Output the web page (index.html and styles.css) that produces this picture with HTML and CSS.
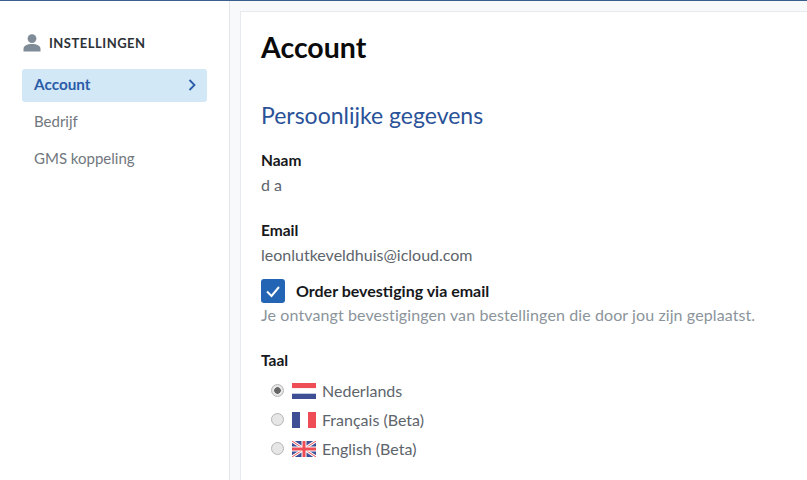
FILE: index.html
```html
<!DOCTYPE html>
<html lang="nl">
<head>
<meta charset="utf-8">
<title>Instellingen</title>
<link rel="stylesheet" href="styles.css">
</head>
<body>
<div class="app">
  <aside class="sidebar">
    <div class="side-head">
      <svg class="user-icon" viewBox="0 0 18 18" width="18" height="18"><circle cx="9" cy="4.6" r="4.4" fill="#7f8b96"/><path d="M0.500 17.500v-2.600c0-3 3.600-4.900 8.500-4.900s8.500 1.900 8.500 4.900v2.600z" fill="#7f8b96"/></svg>
      <span class="side-title">INSTELLINGEN</span>
    </div>
    <nav class="menu">
      <a class="item active"><span class="item-text">Account</span>
        <svg class="chev" viewBox="0 0 8 12" width="8" height="12"><path d="M1.500 1l5 5-5 5" fill="none" stroke="#2a5ca8" stroke-width="1.800"/></svg>
      </a>
      <a class="item"><span class="item-text">Bedrijf</span></a>
      <a class="item"><span class="item-text">GMS koppeling</span></a>
    </nav>
  </aside>
  <main class="main">
    <section class="card">
      <h1 class="title">Account</h1>
      <h2 class="subtitle">Persoonlijke gegevens</h2>
      <div class="label label-naam">Naam</div>
      <div class="value">d a</div>
      <div class="label label-email">Email</div>
      <div class="value">leonlutkeveldhuis@icloud.com</div>
      <div class="check-row">
        <span class="checkbox"><svg viewBox="0 0 24 24" width="24" height="24"><path d="M6 12.500l4.500 4.500 7.500-9" fill="none" stroke="#fff" stroke-width="2"/></svg></span>
        <span class="check-label">Order bevestiging via email</span>
      </div>
      <div class="hint">Je ontvangt bevestigingen van bestellingen die door jou zijn geplaatst.</div>
      <div class="label label-taal">Taal</div>
      <div class="langs">
        <div class="lang"><span class="radio on"></span>
          <svg class="flag" viewBox="0 0 24 16" width="24" height="16"><rect width="24" height="5.300" fill="#ee4d55"/><rect y="5.300" width="24" height="5.400" fill="#fff"/><rect y="10.700" width="24" height="5.300" fill="#3f4f96"/></svg>
          <span>Nederlands</span></div>
        <div class="lang"><span class="radio"></span>
          <svg class="flag" viewBox="0 0 24 16" width="24" height="16"><rect width="8" height="16" fill="#3f4f96"/><rect x="8" width="8" height="16" fill="#fff"/><rect x="16" width="8" height="16" fill="#ee4d55"/></svg>
          <span>Français (Beta)</span></div>
        <div class="lang"><span class="radio"></span>
          <svg class="flag" viewBox="0 0 24 16" width="24" height="16"><rect width="24" height="16" fill="#3f4f96"/><path d="M0 0l24 16M24 0L0 16" stroke="#fff" stroke-width="3"/><path d="M0 0l24 16M24 0L0 16" stroke="#ee4d55" stroke-width="1"/><path d="M12 0v16M0 8h24" stroke="#fff" stroke-width="5"/><path d="M12 0v16M0 8h24" stroke="#ee4d55" stroke-width="3"/></svg>
          <span>English (Beta)</span></div>
      </div>
    </section>
  </main>
</div>
</body>
</html>
```
FILE: styles.css
```css
* { box-sizing: border-box; }
html, body { margin: 0; height: 100%; overflow: hidden; }
body { font-family: "Lato", "Liberation Sans", sans-serif; background: #f8f9fb; color: #5d646b; }
.app { display: flex; height: 480px; border-top: 1px solid #3a5f8f; }
.sidebar { width: 230px; flex: none; background: #fff; border-right: 1px solid #e3e7ec; padding: 32px 22px 0; }
.side-head { display: flex; align-items: center; gap: 8px; height: 20px; padding-left: 1px; }
.side-title { font-size: 13px; font-weight: 700; letter-spacing: 0.5px; color: #2d3238; }
.menu { margin-top: 16px; width: 185px; display: flex; flex-direction: column; gap: 4px; }
.item { display: flex; align-items: center; justify-content: space-between; height: 33px; padding: 0 11px 0 12px; font-size: 15px; color: #70777e; border-radius: 3px; }
.item-text { position: relative; top: -1.500px; }
.chev { position: relative; top: -1px; }
.item.active { background: #d3e8f6; color: #2a5ca8; font-weight: 700; font-size: 15.300px; }
.main { flex: 1; padding: 10px 0 0 10px; min-width: 0; }
.card { background: #fff; border: 1px solid #e6e9ee; border-right: 0; border-bottom: 0; height: 469px; padding: 19px 0 0 20px; }
.title { margin: 0; font-size: 28.500px; line-height: 32px; font-weight: 700; color: #0a0a0a; }
.subtitle { margin: 39px 0 0; font-size: 23px; line-height: 26px; font-weight: 400; color: #2a5298; }
.label { font-size: 15.500px; line-height: 18px; font-weight: 700; color: #16181b; }
.label-naam { margin-top: 23px; }
.label-email { margin-top: 27px; }
.label-taal { margin-top: 27px; }
.value { margin-top: 7px; font-size: 16px; line-height: 18px; color: #5d646b; }
.check-row { display: flex; align-items: center; gap: 11px; margin-top: 15px; height: 24px; }
.checkbox { width: 24px; height: 24px; background: #2464b4; border-radius: 3px; display: block; }
.checkbox svg { display: block; }
.check-label { font-size: 16px; font-weight: 700; color: #16181b; position: relative; top: -1px; }
.hint { margin-top: 3px; font-size: 16px; letter-spacing: 0.1px; line-height: 18px; color: #8b949b; }
.langs { margin-top: 12px; display: flex; flex-direction: column; gap: 11px; }
.lang { display: flex; align-items: center; height: 18px; font-size: 16px; color: #5d646b; }
.radio { width: 13px; height: 13px; margin: 0 8px 0 10px; border-radius: 50%; background: #e6e6e6; border: 1px solid #b5b5b5; flex: none; }
.radio.on { background: radial-gradient(circle, #666 0 3px, #e6e6e6 3.500px); }
.flag { flex: none; margin: 1px 6px 0 0; height: 16px; }
```
